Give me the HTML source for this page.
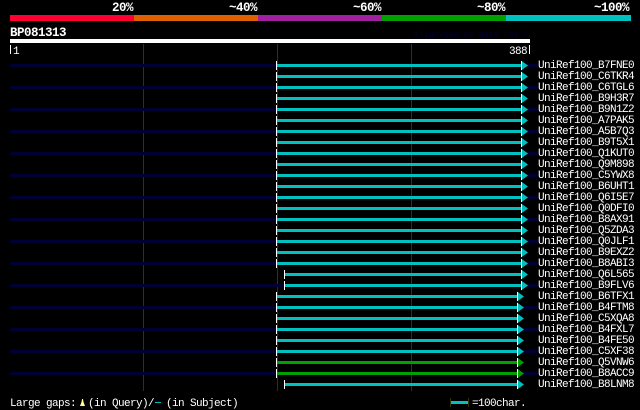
<!DOCTYPE html>
<html>
<head>
<meta charset="utf-8">
<style>
html,body{margin:0;padding:0;background:#000;}
svg{display:block;}
text{font-family:"Liberation Mono","DejaVu Sans Mono",monospace;fill:#fff;}
rect{shape-rendering:crispEdges;}
.l{font-size:11px;letter-spacing:-.6px;}
.b{font-size:12.5px;font-weight:bold;letter-spacing:-.5px;}
</style>
</head>
<body>
<svg width="640" height="410" viewBox="0 0 640 410" xmlns="http://www.w3.org/2000/svg">
<rect width="640" height="410" fill="#000"/>
<text class="b" x="133" y="11" text-anchor="end">20%</text>
<text class="b" x="257" y="11" text-anchor="end">~40%</text>
<text class="b" x="381" y="11" text-anchor="end">~60%</text>
<text class="b" x="505" y="11" text-anchor="end">~80%</text>
<text class="b" x="629" y="11" text-anchor="end">~100%</text>
<rect x="10" y="15" width="124" height="6" fill="#ff0033"/>
<rect x="134" y="15" width="124" height="6" fill="#e06000"/>
<rect x="258" y="15" width="124" height="6" fill="#a020a0"/>
<rect x="382" y="15" width="124" height="6" fill="#00a000"/>
<rect x="506" y="15" width="125" height="6" fill="#00c0c0"/>
<text class="b" x="10" y="36">BP081313</text>
<text x="414" y="37" style="font-size:8.3px;fill:#000033">AlignView.pm Beta rel.7</text>
<rect x="10" y="39" width="520" height="4" fill="#fff"/>
<rect x="10" y="45" width="1" height="9" fill="#fff"/>
<text class="l" x="13" y="54">1</text>
<text class="l" x="509" y="54">388</text>
<rect x="529" y="45" width="1" height="9" fill="#fff"/>
<rect x="143" y="44" width="1" height="347" fill="#333300"/>
<rect x="277" y="44" width="1" height="347" fill="#333300"/>
<rect x="411" y="44" width="1" height="347" fill="#333300"/>
<g id="rows">
<rect x="10" y="64" width="266" height="3" fill="#000033"/><rect x="527" y="64" width="11" height="3" fill="#000033"/><rect x="277" y="64" width="244" height="3" fill="#00c0c0"/><polygon points="521,60.5 528,65.5 521,70.5" fill="#00c0c0"/><rect x="276" y="61" width="1" height="9" fill="#fff"/><rect x="521" y="61" width="1" height="9" fill="#fff"/><text class="l" x="538" y="68">UniRef100_B7FNE0</text>
<rect x="277" y="75" width="244" height="3" fill="#00c0c0"/><polygon points="521,71.5 528,76.5 521,81.5" fill="#00c0c0"/><rect x="276" y="72" width="1" height="9" fill="#fff"/><rect x="521" y="72" width="1" height="9" fill="#fff"/><text class="l" x="538" y="79">UniRef100_C6TKR4</text>
<rect x="10" y="86" width="266" height="3" fill="#000033"/><rect x="527" y="86" width="11" height="3" fill="#000033"/><rect x="277" y="86" width="244" height="3" fill="#00c0c0"/><polygon points="521,82.5 528,87.5 521,92.5" fill="#00c0c0"/><rect x="276" y="83" width="1" height="9" fill="#fff"/><rect x="521" y="83" width="1" height="9" fill="#fff"/><text class="l" x="538" y="90">UniRef100_C6TGL6</text>
<rect x="277" y="97" width="244" height="3" fill="#00c0c0"/><polygon points="521,93.5 528,98.5 521,103.5" fill="#00c0c0"/><rect x="276" y="94" width="1" height="9" fill="#fff"/><rect x="521" y="94" width="1" height="9" fill="#fff"/><text class="l" x="538" y="101">UniRef100_B9H3R7</text>
<rect x="10" y="108" width="266" height="3" fill="#000033"/><rect x="527" y="108" width="11" height="3" fill="#000033"/><rect x="277" y="108" width="244" height="3" fill="#00c0c0"/><polygon points="521,104.5 528,109.5 521,114.5" fill="#00c0c0"/><rect x="276" y="105" width="1" height="9" fill="#fff"/><rect x="521" y="105" width="1" height="9" fill="#fff"/><text class="l" x="538" y="112">UniRef100_B9N1Z2</text>
<rect x="277" y="119" width="244" height="3" fill="#00c0c0"/><polygon points="521,115.5 528,120.5 521,125.5" fill="#00c0c0"/><rect x="276" y="116" width="1" height="9" fill="#fff"/><rect x="521" y="116" width="1" height="9" fill="#fff"/><text class="l" x="538" y="123">UniRef100_A7PAK5</text>
<rect x="10" y="130" width="266" height="3" fill="#000033"/><rect x="527" y="130" width="11" height="3" fill="#000033"/><rect x="277" y="130" width="244" height="3" fill="#00c0c0"/><polygon points="521,126.5 528,131.5 521,136.5" fill="#00c0c0"/><rect x="276" y="127" width="1" height="9" fill="#fff"/><rect x="521" y="127" width="1" height="9" fill="#fff"/><text class="l" x="538" y="134">UniRef100_A5B7Q3</text>
<rect x="277" y="141" width="244" height="3" fill="#00c0c0"/><polygon points="521,137.5 528,142.5 521,147.5" fill="#00c0c0"/><rect x="276" y="138" width="1" height="9" fill="#fff"/><rect x="521" y="138" width="1" height="9" fill="#fff"/><text class="l" x="538" y="145">UniRef100_B9T5X1</text>
<rect x="10" y="152" width="266" height="3" fill="#000033"/><rect x="527" y="152" width="11" height="3" fill="#000033"/><rect x="277" y="152" width="244" height="3" fill="#00c0c0"/><polygon points="521,148.5 528,153.5 521,158.5" fill="#00c0c0"/><rect x="276" y="149" width="1" height="9" fill="#fff"/><rect x="521" y="149" width="1" height="9" fill="#fff"/><text class="l" x="538" y="156">UniRef100_Q1KUT0</text>
<rect x="277" y="163" width="244" height="3" fill="#00c0c0"/><polygon points="521,159.5 528,164.5 521,169.5" fill="#00c0c0"/><rect x="276" y="160" width="1" height="9" fill="#fff"/><rect x="521" y="160" width="1" height="9" fill="#fff"/><text class="l" x="538" y="167">UniRef100_Q9M898</text>
<rect x="10" y="174" width="266" height="3" fill="#000033"/><rect x="527" y="174" width="11" height="3" fill="#000033"/><rect x="277" y="174" width="244" height="3" fill="#00c0c0"/><polygon points="521,170.5 528,175.5 521,180.5" fill="#00c0c0"/><rect x="276" y="171" width="1" height="9" fill="#fff"/><rect x="521" y="171" width="1" height="9" fill="#fff"/><text class="l" x="538" y="178">UniRef100_C5YWX8</text>
<rect x="277" y="185" width="244" height="3" fill="#00c0c0"/><polygon points="521,181.5 528,186.5 521,191.5" fill="#00c0c0"/><rect x="276" y="182" width="1" height="9" fill="#fff"/><rect x="521" y="182" width="1" height="9" fill="#fff"/><text class="l" x="538" y="189">UniRef100_B6UHT1</text>
<rect x="10" y="196" width="266" height="3" fill="#000033"/><rect x="527" y="196" width="11" height="3" fill="#000033"/><rect x="277" y="196" width="244" height="3" fill="#00c0c0"/><polygon points="521,192.5 528,197.5 521,202.5" fill="#00c0c0"/><rect x="276" y="193" width="1" height="9" fill="#fff"/><rect x="521" y="193" width="1" height="9" fill="#fff"/><text class="l" x="538" y="200">UniRef100_Q6I5E7</text>
<rect x="277" y="207" width="244" height="3" fill="#00c0c0"/><polygon points="521,203.5 528,208.5 521,213.5" fill="#00c0c0"/><rect x="276" y="204" width="1" height="9" fill="#fff"/><rect x="521" y="204" width="1" height="9" fill="#fff"/><text class="l" x="538" y="211">UniRef100_Q0DFI0</text>
<rect x="10" y="218" width="266" height="3" fill="#000033"/><rect x="527" y="218" width="11" height="3" fill="#000033"/><rect x="277" y="218" width="244" height="3" fill="#00c0c0"/><polygon points="521,214.5 528,219.5 521,224.5" fill="#00c0c0"/><rect x="276" y="215" width="1" height="9" fill="#fff"/><rect x="521" y="215" width="1" height="9" fill="#fff"/><text class="l" x="538" y="222">UniRef100_B8AX91</text>
<rect x="277" y="229" width="244" height="3" fill="#00c0c0"/><polygon points="521,225.5 528,230.5 521,235.5" fill="#00c0c0"/><rect x="276" y="226" width="1" height="9" fill="#fff"/><rect x="521" y="226" width="1" height="9" fill="#fff"/><text class="l" x="538" y="233">UniRef100_Q5ZDA3</text>
<rect x="10" y="240" width="266" height="3" fill="#000033"/><rect x="527" y="240" width="11" height="3" fill="#000033"/><rect x="277" y="240" width="244" height="3" fill="#00c0c0"/><polygon points="521,236.5 528,241.5 521,246.5" fill="#00c0c0"/><rect x="276" y="237" width="1" height="9" fill="#fff"/><rect x="521" y="237" width="1" height="9" fill="#fff"/><text class="l" x="538" y="244">UniRef100_Q0JLF1</text>
<rect x="277" y="251" width="244" height="3" fill="#00c0c0"/><polygon points="521,247.5 528,252.5 521,257.5" fill="#00c0c0"/><rect x="276" y="248" width="1" height="9" fill="#fff"/><rect x="521" y="248" width="1" height="9" fill="#fff"/><text class="l" x="538" y="255">UniRef100_B9EXZ2</text>
<rect x="10" y="262" width="266" height="3" fill="#000033"/><rect x="527" y="262" width="11" height="3" fill="#000033"/><rect x="277" y="262" width="244" height="3" fill="#00c0c0"/><polygon points="521,258.5 528,263.5 521,268.5" fill="#00c0c0"/><rect x="276" y="259" width="1" height="9" fill="#fff"/><rect x="521" y="259" width="1" height="9" fill="#fff"/><text class="l" x="538" y="266">UniRef100_B8ABI3</text>
<rect x="285" y="273" width="236" height="3" fill="#00c0c0"/><polygon points="521,269.5 528,274.5 521,279.5" fill="#00c0c0"/><rect x="284" y="270" width="1" height="9" fill="#fff"/><rect x="521" y="270" width="1" height="9" fill="#fff"/><text class="l" x="538" y="277">UniRef100_Q6L565</text>
<rect x="10" y="284" width="274" height="3" fill="#000033"/><rect x="527" y="284" width="11" height="3" fill="#000033"/><rect x="285" y="284" width="236" height="3" fill="#00c0c0"/><polygon points="521,280.5 528,285.5 521,290.5" fill="#00c0c0"/><rect x="284" y="281" width="1" height="9" fill="#fff"/><rect x="521" y="281" width="1" height="9" fill="#fff"/><text class="l" x="538" y="288">UniRef100_B9FLV6</text>
<rect x="277" y="295" width="240" height="3" fill="#00c0c0"/><polygon points="517,291.5 524,296.5 517,301.5" fill="#00c0c0"/><rect x="276" y="292" width="1" height="9" fill="#fff"/><rect x="517" y="292" width="1" height="9" fill="#fff"/><text class="l" x="538" y="299">UniRef100_B6TFX1</text>
<rect x="10" y="306" width="266" height="3" fill="#000033"/><rect x="523" y="306" width="15" height="3" fill="#000033"/><rect x="277" y="306" width="240" height="3" fill="#00c0c0"/><polygon points="517,302.5 524,307.5 517,312.5" fill="#00c0c0"/><rect x="276" y="303" width="1" height="9" fill="#fff"/><rect x="517" y="303" width="1" height="9" fill="#fff"/><text class="l" x="538" y="310">UniRef100_B4FTM8</text>
<rect x="277" y="317" width="240" height="3" fill="#00c0c0"/><polygon points="517,313.5 524,318.5 517,323.5" fill="#00c0c0"/><rect x="276" y="314" width="1" height="9" fill="#fff"/><rect x="517" y="314" width="1" height="9" fill="#fff"/><text class="l" x="538" y="321">UniRef100_C5XQA8</text>
<rect x="10" y="328" width="266" height="3" fill="#000033"/><rect x="523" y="328" width="15" height="3" fill="#000033"/><rect x="277" y="328" width="240" height="3" fill="#00c0c0"/><polygon points="517,324.5 524,329.5 517,334.5" fill="#00c0c0"/><rect x="276" y="325" width="1" height="9" fill="#fff"/><rect x="517" y="325" width="1" height="9" fill="#fff"/><text class="l" x="538" y="332">UniRef100_B4FXL7</text>
<rect x="277" y="339" width="240" height="3" fill="#00c0c0"/><polygon points="517,335.5 524,340.5 517,345.5" fill="#00c0c0"/><rect x="276" y="336" width="1" height="9" fill="#fff"/><rect x="517" y="336" width="1" height="9" fill="#fff"/><text class="l" x="538" y="343">UniRef100_B4FE50</text>
<rect x="10" y="350" width="266" height="3" fill="#000033"/><rect x="523" y="350" width="15" height="3" fill="#000033"/><rect x="277" y="350" width="240" height="3" fill="#00c0c0"/><polygon points="517,346.5 524,351.5 517,356.5" fill="#00c0c0"/><rect x="276" y="347" width="1" height="9" fill="#fff"/><rect x="517" y="347" width="1" height="9" fill="#fff"/><text class="l" x="538" y="354">UniRef100_C5XF38</text>
<rect x="277" y="361" width="240" height="3" fill="#00a000"/><polygon points="517,357.5 524,362.5 517,367.5" fill="#00a000"/><rect x="276" y="358" width="1" height="9" fill="#fff"/><rect x="517" y="358" width="1" height="9" fill="#fff"/><text class="l" x="538" y="365">UniRef100_Q5VNW6</text>
<rect x="10" y="372" width="266" height="3" fill="#000033"/><rect x="523" y="372" width="15" height="3" fill="#000033"/><rect x="277" y="372" width="240" height="3" fill="#00a000"/><polygon points="517,368.5 524,373.5 517,378.5" fill="#00a000"/><rect x="276" y="369" width="1" height="9" fill="#fff"/><rect x="517" y="369" width="1" height="9" fill="#fff"/><text class="l" x="538" y="376">UniRef100_B8ACC9</text>
<rect x="285" y="383" width="232" height="3" fill="#00c0c0"/><polygon points="517,379.5 524,384.5 517,389.5" fill="#00c0c0"/><rect x="284" y="380" width="1" height="9" fill="#fff"/><rect x="517" y="380" width="1" height="9" fill="#fff"/><text class="l" x="538" y="387">UniRef100_B8LNM8</text>
</g>
<text class="l" x="10" y="406">Large gaps:</text>
<polygon points="80,406 81.5,402 82,399 83,399 83.5,402 85,406" fill="#ffff99"/>
<text class="l" x="88" y="406">(in Query)/</text>
<rect x="155" y="402" width="6" height="1" fill="#00c0c0"/>
<text class="l" x="166" y="406">(in Subject)</text>
<rect x="450" y="398" width="1" height="9" fill="#333300"/>
<rect x="468" y="398" width="1" height="9" fill="#333300"/>
<rect x="451" y="401" width="17" height="3" fill="#00c0c0"/>
<text class="l" x="472" y="406">=100char.</text>
</svg>
</body>
</html>
